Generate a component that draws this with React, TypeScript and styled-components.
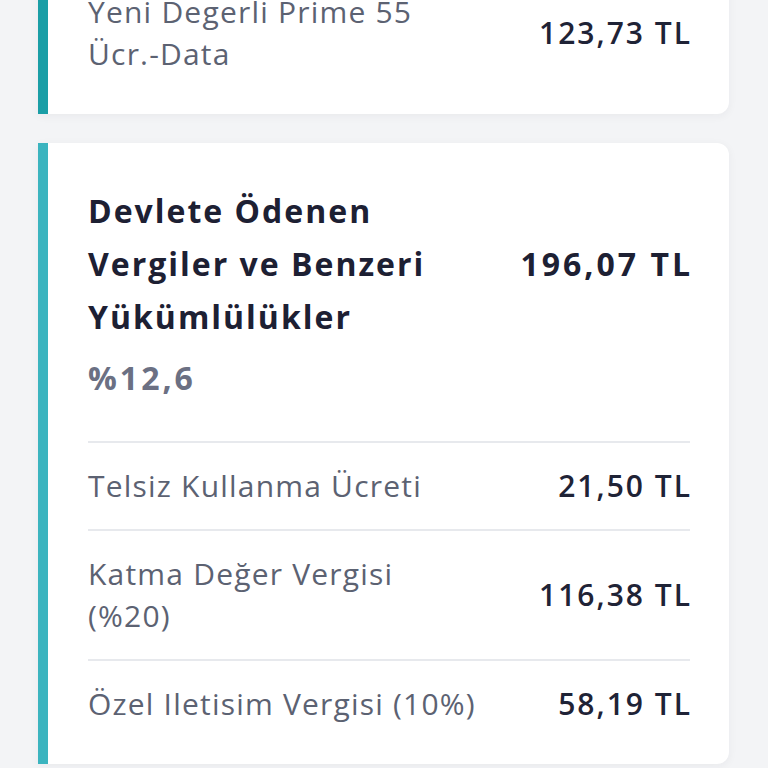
import styled, { createGlobalStyle } from "styled-components";

const GlobalStyle = createGlobalStyle`
  html, body {
    margin: 0;
    padding: 0;
    background: #f3f4f6;
    font-family: "Open Sans", Lato, "Liberation Sans", sans-serif;
  }
`;

const Page = styled.div`
  width: 768px;
  height: 768px;
  overflow: hidden;
  box-sizing: border-box;
  padding: 0 39px 0 38px;
  display: flex;
  flex-direction: column;
  gap: 29px;
`;

const Card = styled.section<{ $accent: string; $offset?: number }>`
  background: #ffffff;
  border-left: 10px solid ${(p) => p.$accent};
  border-radius: 0 12px 12px 0;
  box-shadow: 0 2px 10px rgba(30, 40, 60, 0.05);
  padding: 0 39px 17px 40px;
  margin-top: ${(p) => p.$offset ?? 0}px;
  flex-shrink: 0;
`;

const Header = styled.div`
  padding: 41px 0 42px;
  border-bottom: 2px solid #e7e9ed;
`;

const HeaderTop = styled.div`
  display: flex;
  align-items: center;
  justify-content: space-between;
  gap: 24px;
`;

const Title = styled.h2`
  margin: 0;
  font-size: 32px;
  line-height: 53px;
  font-weight: 700;
  letter-spacing: 2px;
  color: #1d2033;
  max-width: 380px;
`;

const Total = styled.div`
  font-size: 32px;
  font-weight: 700;
  letter-spacing: 3px;
  margin-right: -3px;
  color: #1d2033;
  white-space: nowrap;
`;

const Percent = styled.div`
  margin-top: 14px;
  font-size: 32px;
  line-height: 42px;
  font-weight: 700;
  letter-spacing: 3px;
  color: #6b7083;
`;

const Row = styled.div<{ $last?: boolean }>`
  display: flex;
  align-items: center;
  justify-content: space-between;
  gap: 24px;
  padding: 22px 0;
  border-bottom: ${(p) => (p.$last ? "none" : "2px solid #e7e9ed")};
`;

const Label = styled.div<{ $width?: number }>`
  font-size: 30px;
  line-height: 42px;
  letter-spacing: 1.2px;
  color: #5c6272;
  max-width: ${(p) => (p.$width ? `${p.$width}px` : "none")};
`;

const Amount = styled.div`
  font-size: 30px;
  line-height: 42px;
  font-weight: 600;
  letter-spacing: 2px;
  margin-right: -2px;
  color: #1f2336;
  white-space: nowrap;
`;

const taxes = [
  { label: "Telsiz Kullanma Ücreti", amount: "21,50 TL" },
  { label: "Katma Değer Vergisi (%20)", amount: "116,38 TL", width: 345 },
  { label: "Özel Iletisim Vergisi (10%)", amount: "58,19 TL" },
];

export default function App() {
  return (
    <>
      <GlobalStyle />
      <Page>
        <Card $accent="#1a9ea6" $offset={-31}>
          <Row $last>
            <Label $width={345}>Yeni Degerli Prime 55 Ücr.-Data</Label>
            <Amount>123,73 TL</Amount>
          </Row>
        </Card>
        <Card $accent="#3bb4bf">
          <Header>
            <HeaderTop>
              <Title>Devlete Ödenen Vergiler ve Benzeri Yükümlülükler</Title>
              <Total>196,07 TL</Total>
            </HeaderTop>
            <Percent>%12,6</Percent>
          </Header>
          {taxes.map((t, i) => (
            <Row key={t.label} $last={i === taxes.length - 1}>
              <Label $width={t.width}>{t.label}</Label>
              <Amount>{t.amount}</Amount>
            </Row>
          ))}
        </Card>
      </Page>
    </>
  );
}
